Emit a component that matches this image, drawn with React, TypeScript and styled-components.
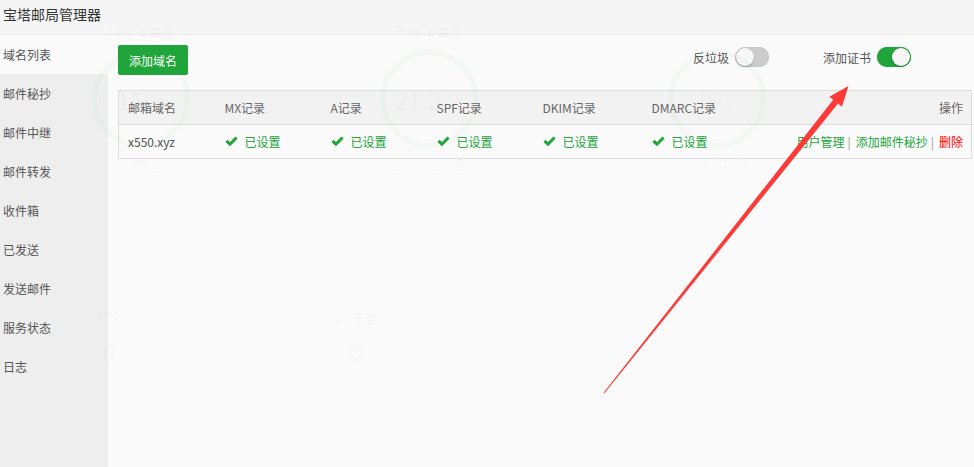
import React from 'react';
import styled, { createGlobalStyle } from 'styled-components';

interface DomainRow {
  domain: string;
  records: string[];
}

interface Gauge {
  label: string;
  value: string;
  sub: string;
}

const menu = ['域名列表', '邮件秘抄', '邮件中继', '邮件转发', '收件箱', '已发送', '发送邮件', '服务状态', '日志'];
const columns = ['MX记录', 'A记录', 'SPF记录', 'DKIM记录', 'DMARC记录'];
const rows: DomainRow[] = [
  { domain: 'x550.xyz', records: ['已设置', '已设置', '已设置', '已设置', '已设置'] },
];

// the panel page behind the dialog, only faintly visible
const gauges: Gauge[] = [
  { label: 'CPU使用率', value: '15%', sub: '1 核心' },
  { label: '内存使用率', value: '21.2%', sub: '210/991(MB)' },
  { label: '', value: '0%', sub: '3.7G/50G' },
];
const counters = [
  { label: 'FTP', value: '0' },
  { label: '数据库', value: '0' },
];

const Check = () => (
  <svg width="13" height="11" viewBox="0 0 13 11">
    <path d="M0.4 5.9 L2.6 3.8 L5 6.1 L10.5 0.5 L12.6 2.6 L5 10.2 Z" fill="#20a53a" />
  </svg>
);

const App = () => (
  <Page>
    <GlobalStyle />
    <Title>宝塔邮局管理器</Title>
    <Body>
      <Sidebar>
        {menu.map((item, i) => (
          <MenuItem key={item} active={i === 0}>{item}</MenuItem>
        ))}
      </Sidebar>
      <Content>
        <Toolbar>
          <GreenButton>添加域名</GreenButton>
          <Switches>
            <SwitchLabel>
              反垃圾
              <Switch on={false}><Knob on={false} /></Switch>
            </SwitchLabel>
            <SwitchLabel>
              添加证书
              <Switch on><Knob on /></Switch>
            </SwitchLabel>
          </Switches>
        </Toolbar>
        <Table>
          <colgroup>
            <col style={{ width: 97 }} />
            <col style={{ width: 106 }} />
            <col style={{ width: 106 }} />
            <col style={{ width: 106 }} />
            <col style={{ width: 109 }} />
            <col style={{ width: 120 }} />
            <col />
          </colgroup>
          <thead>
            <tr>
              <Th>邮箱域名</Th>
              {columns.map((c) => <Th key={c}>{c}</Th>)}
              <Th right>操作</Th>
            </tr>
          </thead>
          <tbody>
            {rows.map((r) => (
              <tr key={r.domain}>
                <Td>{r.domain}</Td>
                {r.records.map((rec, i) => (
                  <Td key={i}>
                    <Status><Check />{rec}</Status>
                  </Td>
                ))}
                <Td right>
                  <OpLink>用户管理</OpLink>
                  <Sep>|</Sep>
                  <OpLink>添加邮件秘抄</OpLink>
                  <Sep>|</Sep>
                  <OpLink danger>删除</OpLink>
                </Td>
              </tr>
            ))}
          </tbody>
        </Table>
      </Content>
    </Body>

    <Ghost>
      <GaugeRow>
        {gauges.map((g) => (
          <GaugeCard key={g.value}>
            <GhostLabel>{g.label || '\u00a0'}</GhostLabel>
            <Ring>{g.value}</Ring>
            <GhostLabel>{g.sub}</GhostLabel>
          </GaugeCard>
        ))}
      </GaugeRow>
      <CounterRow>
        {counters.map((c) => (
          <Counter key={c.label}>
            <GhostLabel>{c.label}</GhostLabel>
            <GhostValue>{c.value}</GhostValue>
          </Counter>
        ))}
      </CounterRow>
      <TrafficTitle>流量</TrafficTitle>
    </Ghost>

    <Arrow width="974" height="467" viewBox="0 0 974 467">
      <polygon
        points="603.6,392.7 833.2,99.8 829.3,96.7 848.5,86 841.9,106.7 838,103.6 604.4,393.3"
        fill="#fd3a37"
      />
    </Arrow>
  </Page>
);

export default App;

const GlobalStyle = createGlobalStyle`
  html, body {
    margin: 0;
    padding: 0;
    background: #fafafa;
  }
  body {
    font-family: "Microsoft YaHei", "Noto Sans CJK SC", "Noto Sans", sans-serif;
    font-size: 12px;
    color: #555;
  }
`;

const Page = styled.div`
  position: relative;
  width: 974px;
  height: 467px;
  overflow: hidden;
  display: flex;
  flex-direction: column;
  background: #fafafa;
`;

const Title = styled.div`
  height: 34px;
  line-height: 28px;
  padding-left: 3px;
  font-size: 14px;
  color: #333;
  background: #f5f5f5;
  border-bottom: 1px solid #e8e8e8;
  flex-shrink: 0;
`;

const Body = styled.div`
  flex: 1;
  display: flex;
`;

const Sidebar = styled.div`
  width: 108px;
  background: #eeeeee;
  display: flex;
  flex-direction: column;
`;

const MenuItem = styled.div<{ active?: boolean }>`
  height: 39px;
  line-height: 39px;
  padding-left: 3px;
  font-size: 12px;
  color: #555;
  background: ${(p) => (p.active ? '#fafafa' : 'transparent')};
`;

const Content = styled.div`
  flex: 1;
  padding: 10px 2px 0 10px;
`;

const Toolbar = styled.div`
  display: flex;
  align-items: center;
  justify-content: space-between;
  height: 30px;
  margin-bottom: 15px;
`;

const GreenButton = styled.button`
  height: 30px;
  width: 70px;
  border: none;
  border-radius: 2px;
  background: #20a53a;
  color: #fff;
  font-family: inherit;
  font-size: 12px;
  padding: 0;
`;

const Switches = styled.div`
  display: flex;
  align-items: center;
  gap: 54px;
  padding-right: 61px;
  margin-top: -6px;
`;

const SwitchLabel = styled.label`
  display: flex;
  align-items: center;
  gap: 6px;
  font-size: 12px;
  color: #555;
`;

const Switch = styled.span<{ on: boolean }>`
  position: relative;
  width: 34px;
  height: 20px;
  border-radius: 10px;
  background: ${(p) => (p.on ? '#20a53a' : '#cccccc')};
  box-shadow: inset 0 0 0 1px ${(p) => (p.on ? '#20a53a' : '#c8c8c8')};
`;

const Knob = styled.span<{ on: boolean }>`
  position: absolute;
  top: 1px;
  left: ${(p) => (p.on ? '15px' : '1px')};
  width: 18px;
  height: 18px;
  border-radius: 50%;
  background: #f7f7f7;
  box-shadow: 0 1px 2px rgba(0, 0, 0, 0.25);
`;

const Table = styled.table`
  width: 100%;
  table-layout: fixed;
  border-collapse: collapse;
  border: 1px solid #dddddd;
`;

const Th = styled.th<{ right?: boolean }>`
  height: 33px;
  padding: 0 8px 0 9px;
  background: #f2f2f2;
  border-bottom: 1px solid #dddddd;
  font-weight: normal;
  color: #666;
  text-align: ${(p) => (p.right ? 'right' : 'left')};
  white-space: nowrap;
`;

const Td = styled.td<{ right?: boolean }>`
  height: 33px;
  padding: 0 8px 0 9px;
  color: #555;
  text-align: ${(p) => (p.right ? 'right' : 'left')};
  white-space: nowrap;
`;

const Status = styled.span`
  display: inline-flex;
  align-items: center;
  gap: 7px;
  color: #20a53a;
`;

const OpLink = styled.a<{ danger?: boolean }>`
  color: ${(p) => (p.danger ? '#ff0000' : '#20a53a')};
  text-decoration: none;
`;

const Sep = styled.span`
  color: #999;
  margin: 0 5px 0 3px;
`;

/* faint page behind the dialog */
const Ghost = styled.div`
  position: absolute;
  inset: 0;
  pointer-events: none;
  color: rgba(0, 0, 0, 0.028);
  display: flex;
  flex-direction: column;
  padding: 24px 0 0 0;
`;

const GaugeRow = styled.div`
  display: flex;
  margin-left: -3px;
`;

const GaugeCard = styled.div`
  width: 288px;
  display: flex;
  flex-direction: column;
  align-items: center;
  gap: 2px;
`;

const GhostLabel = styled.div`
  font-size: 14px;
  line-height: 20px;
`;

const Ring = styled.div`
  width: 88px;
  height: 88px;
  margin: 4px 0;
  border-radius: 50%;
  border: 5px solid rgba(32, 165, 58, 0.028);
  display: flex;
  align-items: center;
  justify-content: center;
  font-size: 24px;
`;

const CounterRow = styled.div`
  display: flex;
  gap: 214px;
  margin: 134px 0 0 96px;
`;

const Counter = styled.div`
  display: flex;
  flex-direction: column;
  align-items: center;
  gap: 8px;
`;

const GhostValue = styled.div`
  font-size: 24px;
  line-height: 30px;
`;

const TrafficTitle = styled.div`
  font-size: 14px;
  margin: 62px 0 0 596px;
`;

const Arrow = styled.svg`
  position: absolute;
  left: 0;
  top: 0;
  pointer-events: none;
`;
